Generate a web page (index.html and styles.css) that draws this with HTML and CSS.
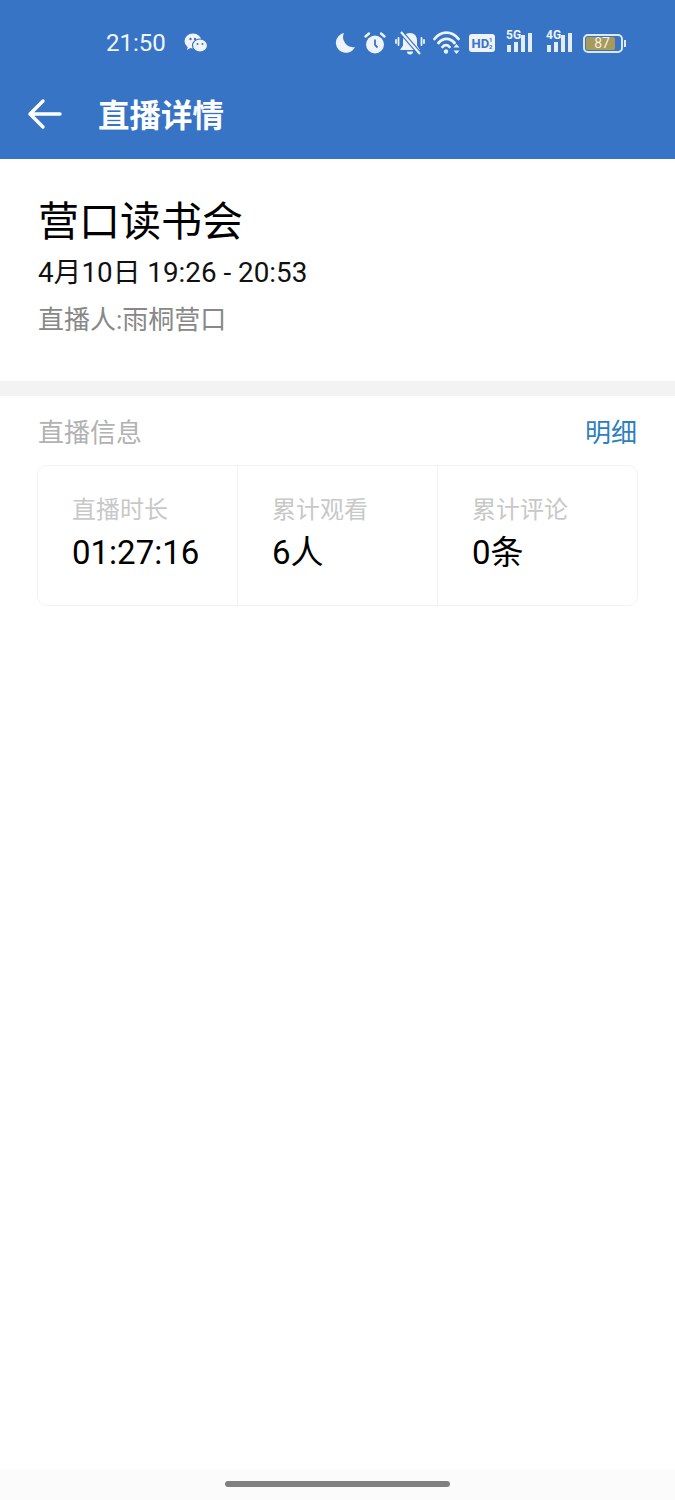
FILE: index.html
```html
<!DOCTYPE html>
<html lang="zh-CN">
<head>
<title>直播详情</title>
<meta charset="UTF-8">
<meta name="viewport" content="width=device-width, initial-scale=1.0">
<link rel="stylesheet" href="styles.css">
</head>
<body>

<div class="page">
  <div class="header">
    <div class="status-bar">
      <div class="status-left">
        <span class="clock">21:50</span>
        <svg class="wechat" width="24" height="20" viewBox="0 0 24 20">
          <ellipse cx="9" cy="8" rx="8.5" ry="7.5" fill="#f1f5fb"/>
          <path d="M4 13l-1 4 5-3z" fill="#f1f5fb"/>
          <ellipse cx="16" cy="12.5" rx="7.5" ry="6.5" fill="#f1f5fb" stroke="#3874c6" stroke-width="1.2"/>
          <circle cx="6.5" cy="6" r="1.2" fill="#3874c6"/>
          <circle cx="11" cy="6" r="1.2" fill="#3874c6"/>
          <circle cx="13.5" cy="11" r="1" fill="#3874c6"/>
          <circle cx="18.5" cy="11" r="1" fill="#3874c6"/>
        </svg>
      </div>
      <div class="status-right">
        <svg width="20" height="22" viewBox="0 0 20 22"><path d="M9 1A10 10 0 1 0 20 15 10 10 0 0 1 9 1z" fill="#eef3fa"/></svg>
        <svg width="24" height="24" viewBox="0 0 24 24">
          <circle cx="12" cy="13.500" r="9" fill="#eef3fa"/>
          <path d="M12 8.500v5.500l2.500 2.500" fill="none" stroke="#3874c6" stroke-width="1.800"/>
          <path d="M2.500 5.500L6 2.500M21.500 5.500L18 2.500" stroke="#eef3fa" stroke-width="2.400" stroke-linecap="round"/>
        </svg>
        <svg width="30" height="24" viewBox="0 0 30 24">
          <path d="M15 2c-4.500 0-7 3-7 7.500v5L5 19h20l-3-4.500v-5C22 5 19.500 2 15 2z" fill="#eef3fa"/>
          <path d="M12 20.500a3 3 0 0 0 6 0z" fill="#eef3fa"/>
          <path d="M6 1L25 23" stroke="#3874c6" stroke-width="4.500"/>
          <path d="M6 1L25 23" stroke="#eef3fa" stroke-width="2.200"/>
          <path d="M3.500 7v7M1 9v3M26.500 7v7M29 9v3" stroke="#eef3fa" stroke-width="1.800" stroke-linecap="round"/>
        </svg>
        <svg width="28" height="24" viewBox="0 0 28 24">
          <path d="M1.500 8C8-.5 19-.5 25.500 8M5.500 12C10 6.500 17 6.500 21.500 12M9.500 16c2-2.500 5-2.500 7 0" fill="none" stroke="#eef3fa" stroke-width="2.800" stroke-linecap="round"/>
          <circle cx="13" cy="20.500" r="2.200" fill="#eef3fa"/>
          <path d="M23.500 13l3 3.500h-6zM23.500 23l3-3.500h-6z" fill="#eef3fa"/>
        </svg>
        <span class="hd">HD<span class="hd-sub">1<br>2</span></span>
        <span class="signal">
          <span class="signal-label">5G</span>
          <span class="bars"><i class="b1"></i><i class="b2"></i><i class="b3"></i><i class="b4"></i></span>
        </span>
        <span class="signal">
          <span class="signal-label">4G</span>
          <span class="bars"><i class="b1"></i><i class="b2"></i><i class="b3"></i><i class="b4"></i></span>
        </span>
        <span class="battery">
          <span class="battery-body">
            <span class="battery-fill"></span>
            <span class="battery-num">87</span>
          </span>
          <span class="battery-cap"></span>
        </span>
      </div>
    </div>
    <div class="nav-bar">
      <svg class="back" width="36" height="32" viewBox="0 0 36 32">
        <path d="M16 3L3 16l13 13M3 16h30" fill="none" stroke="#fff" stroke-width="3.400" stroke-linecap="round" stroke-linejoin="round"/>
      </svg>
      <span class="nav-title">直播详情</span>
    </div>
  </div>

  <div class="live-info">
    <div class="live-title">营口读书会</div>
    <div class="live-time">4月10日 19:26 - 20:53</div>
    <div class="live-host">直播人:雨桐营口</div>
  </div>

  <div class="section">
    <div class="section-head">
      <span class="section-title">直播信息</span>
      <span class="section-link">明细</span>
    </div>
    <div class="stats">
      <div class="stat">
        <div class="stat-label">直播时长</div>
        <div class="stat-value">01:27:16</div>
      </div>
      <div class="stat">
        <div class="stat-label">累计观看</div>
        <div class="stat-value">6人</div>
      </div>
      <div class="stat">
        <div class="stat-label">累计评论</div>
        <div class="stat-value">0条</div>
      </div>
    </div>
  </div>

  <div class="home-bar">
    <div class="home-indicator"></div>
  </div>
</div>

</body>
</html>
```

FILE: styles.css
```css
html, body {
  margin: 0;
  padding: 0;
  background: #fff;
}

body {
  font-family: Roboto, "Noto Sans CJK SC", sans-serif;
}

.page {
  display: flex;
  flex-direction: column;
  height: 1500px;
  overflow: hidden;
}

.header {
  background: #3874c6;
  height: 159px;
  color: #fff;
}

.status-bar {
  display: flex;
  justify-content: space-between;
  align-items: center;
  height: 86px;
  padding: 0 49px 0 106px;
}

.status-left {
  display: flex;
  align-items: center;
  gap: 18px;
}

.clock {
  font-size: 24px;
  color: #f1f5fb;
}

.status-right {
  display: flex;
  align-items: center;
  gap: 8px;
}

.hd {
  display: flex;
  align-items: center;
  justify-content: center;
  width: 26px;
  height: 18px;
  background: #eef3fa;
  border-radius: 3px;
  color: #3874c6;
  font-size: 13px;
  font-weight: 700;
  line-height: 1;
}

.hd-sub {
  font-size: 6px;
  line-height: 7px;
}

.signal {
  position: relative;
  display: block;
  width: 30px;
  height: 24px;
  margin-left: 2px;
}

.signal-label {
  position: absolute;
  left: 1px;
  top: -3px;
  font-size: 12px;
  font-weight: 700;
  line-height: 14px;
  color: #eef3fa;
}

.bars {
  display: flex;
  align-items: flex-end;
  gap: 3px;
  height: 21px;
  padding: 0 0 0 2px;
}

.bars i {
  display: block;
  width: 4px;
  background: #e3edf9;
}

.bars .b1 { height: 7px; }
.bars .b2 { height: 10px; }
.bars .b3 { height: 17px; }
.bars .b4 { height: 19px; }

.battery {
  display: flex;
  align-items: center;
}

.battery-body {
  position: relative;
  display: block;
  width: 40px;
  height: 19px;
  border: 2px solid #dce8f7;
  border-radius: 5px;
  box-sizing: border-box;
}

.battery-fill {
  position: absolute;
  left: 1px;
  top: 1px;
  bottom: 1px;
  width: 29px;
  background: #a89a5c;
  border-radius: 2px;
}

.battery-num {
  position: absolute;
  left: 0;
  right: 2px;
  top: 0;
  text-align: center;
  font-size: 14px;
  line-height: 15px;
  color: #f4f1dc;
}

.battery-cap {
  display: block;
  width: 2px;
  height: 7px;
  margin-left: 1px;
  background: #dce8f7;
}

.nav-bar {
  display: flex;
  align-items: center;
  height: 56px;
  padding-left: 27px;
}

.nav-title {
  margin: -2px 0 0 35px;
  font-size: 31.500px;
  font-weight: 700;
  color: #fff;
}

.live-info {
  height: 237px;
  padding: 38px 38px 0;
  box-sizing: border-box;
  border-bottom: 15px solid #f3f3f3;
}

.live-title {
  font-size: 41px;
  line-height: 50px;
  color: #000;
}

.live-time {
  font-size: 27.800px;
  line-height: 38px;
  margin-top: 7px;
  color: #111;
}

.live-host {
  font-size: 26px;
  line-height: 38px;
  margin-top: 9px;
  color: #888;
}

.section {
  padding: 0 37px;
}

.section-head {
  display: flex;
  justify-content: space-between;
  align-items: center;
  height: 69px;
  padding: 0 1px;
}

.section-title {
  font-size: 26px;
  color: #b2b2b2;
}

.section-link {
  font-size: 26px;
  color: #2c7fc0;
}

.stats {
  display: flex;
  height: 141px;
  box-sizing: border-box;
  border: 1px solid #f2f2f2;
  border-radius: 10px;
}

.stat {
  flex: 1;
  padding: 27px 0 0 34px;
  border-left: 1px solid #f2f2f2;
}

.stat:first-child {
  border-left: 0;
}

.stat-label {
  font-size: 24px;
  line-height: 34px;
  color: #c8c8c8;
}

.stat-value {
  font-size: 33px;
  line-height: 50px;
  margin-top: 1px;
  color: #000;
}

.home-bar {
  margin-top: auto;
  height: 31px;
  background: #fbfbfb;
}

.home-indicator {
  width: 225px;
  height: 6px;
  margin: 12px auto 0;
  border-radius: 3px;
  background: #808080;
}
```
